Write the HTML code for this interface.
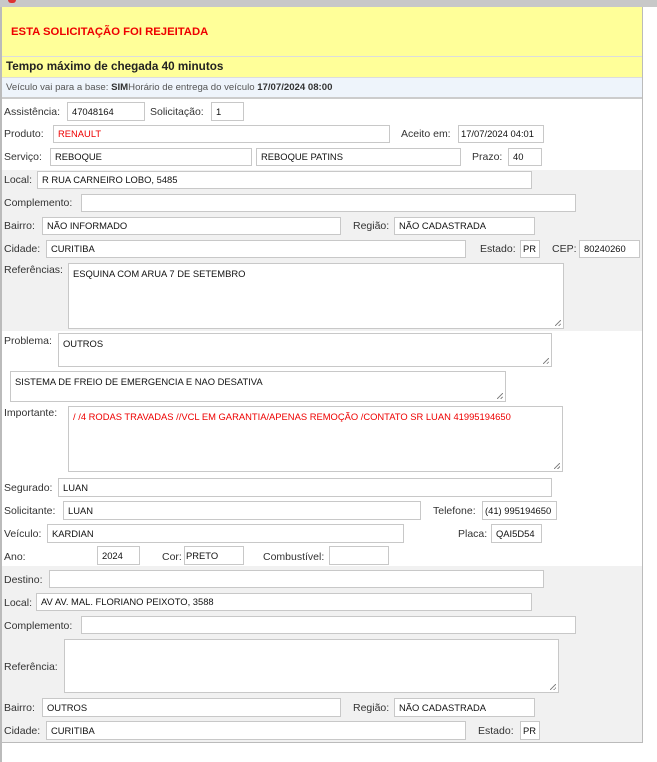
<!DOCTYPE html>
<html><head><meta charset="utf-8"><style>
*{margin:0;padding:0;box-sizing:border-box}
body{width:657px;height:762px;background:#fff;position:relative;overflow:hidden;font-family:"Liberation Sans",sans-serif;font-size:10.5px;color:#333}
.a{position:absolute}
.l{position:absolute;white-space:nowrap;color:#333}
.b{position:absolute;border:1px solid #c8c8c8;background:#fff;padding-left:4px;white-space:nowrap;overflow:hidden;font-size:9.4px;color:#111}
.t{padding-top:4px}
.rz{position:absolute;right:2px;bottom:2px;width:6px;height:6px;background:linear-gradient(135deg,transparent 45%,#888 45%,#888 55%,transparent 55%,transparent 75%,#888 75%,#888 85%,transparent 85%)}
</style></head><body>
<div class="a" style="left:0;top:0;width:657px;height:7px;background:#c8c8c8"></div>
<div class="a" style="left:8px;top:0;width:8px;height:3px;background:#d33;border-radius:0 0 4px 4px"></div>
<div class="a" style="left:1px;top:7px;width:642px;height:736px;border:1px solid #bbb;border-top:none"></div>
<div class="a" style="left:0;top:7px;width:2px;height:755px;background:#bbb"></div>
<div class="a" style="left:2px;top:7px;width:640px;height:49px;background:#ffff99"></div>
<div class="l" style="left:11px;top:26px;color:#e00;font-weight:bold;font-size:11.3px">ESTA SOLICITAÇÃO FOI REJEITADA</div>
<div class="a" style="left:2px;top:56px;width:640px;height:22px;background:#ffff99;border-top:1px solid #ddd;border-bottom:1px solid #ddd"></div>
<div class="l" style="left:6px;top:60px;font-weight:bold;font-size:11.7px;color:#222">Tempo máximo de chegada 40 minutos</div>
<div class="a" style="left:2px;top:78px;width:640px;height:21px;background:#eef4fb;border-bottom:2px solid #ccc"></div>
<div class="l" style="left:6px;top:82px;font-size:9.6px;color:#555">Veículo vai para a base: <b style="color:#333">SIM</b>Horário de entrega do veículo <b style="color:#333">17/07/2024 08:00</b></div>
<div class="a" style="left:2px;top:170px;width:640px;height:161px;background:#f1f1f1"></div>
<div class="a" style="left:2px;top:566px;width:640px;height:176px;background:#f1f1f1"></div>

<div class="l" style="left:4px;top:106px">Assistência:</div><div class="b" style="left:67px;top:102px;width:78px;height:19px;line-height:17px">47048164</div>
<div class="l" style="left:150px;top:106px">Solicitação:</div><div class="b" style="left:211px;top:102px;width:33px;height:19px;line-height:17px">1</div>
<div class="l" style="left:4px;top:128px">Produto:</div><div class="b" style="left:53px;top:125px;width:337px;height:18px;line-height:16px;color:#e00">RENAULT</div>
<div class="l" style="left:401px;top:128px">Aceito em:</div><div class="b" style="left:458px;top:125px;width:86px;height:18px;line-height:16px;padding-left:2px">17/07/2024 04:01</div>
<div class="l" style="left:4px;top:151px">Serviço:</div><div class="b" style="left:50px;top:148px;width:202px;height:18px;line-height:16px">REBOQUE</div>
<div class="b" style="left:256px;top:148px;width:205px;height:18px;line-height:16px">REBOQUE PATINS</div>
<div class="l" style="left:472px;top:151px">Prazo:</div><div class="b" style="left:508px;top:148px;width:34px;height:18px;line-height:16px">40</div>

<div class="l" style="left:4px;top:174px">Local:</div><div class="b" style="left:37px;top:171px;width:495px;height:18px;line-height:16px">R RUA CARNEIRO LOBO, 5485</div>
<div class="l" style="left:4px;top:197px">Complemento:</div><div class="b" style="left:81px;top:194px;width:495px;height:18px"></div>
<div class="l" style="left:4px;top:220px">Bairro:</div><div class="b" style="left:42px;top:217px;width:299px;height:18px;line-height:16px">NÃO INFORMADO</div>
<div class="l" style="left:353px;top:220px">Região:</div><div class="b" style="left:394px;top:217px;width:141px;height:18px;line-height:16px">NÃO CADASTRADA</div>
<div class="l" style="left:4px;top:243px">Cidade:</div><div class="b" style="left:46px;top:240px;width:420px;height:18px;line-height:16px">CURITIBA</div>
<div class="l" style="left:480px;top:243px">Estado:</div><div class="b" style="left:520px;top:240px;width:20px;height:18px;line-height:16px;padding-left:2px">PR</div>
<div class="l" style="left:552px;top:243px">CEP:</div><div class="b" style="left:579px;top:240px;width:61px;height:18px;line-height:16px">80240260</div>
<div class="l" style="left:4px;top:264px">Referências:</div><div class="b t" style="left:68px;top:263px;width:496px;height:66px">ESQUINA COM ARUA 7 DE SETEMBRO<div class="rz"></div></div>

<div class="l" style="left:4px;top:335px">Problema:</div><div class="b t" style="left:58px;top:333px;width:494px;height:34px">OUTROS<div class="rz"></div></div>
<div class="b t" style="left:10px;top:371px;width:496px;height:31px">SISTEMA DE FREIO DE EMERGENCIA E NAO DESATIVA<div class="rz"></div></div>
<div class="l" style="left:4px;top:407px">Importante:</div><div class="b t" style="left:68px;top:406px;width:495px;height:66px;color:#e00">/ /4 RODAS TRAVADAS //VCL EM GARANTIA/APENAS REMOÇÃO /CONTATO SR LUAN 41995194650<div class="rz"></div></div>
<div class="l" style="left:4px;top:482px">Segurado:</div><div class="b" style="left:58px;top:478px;width:494px;height:19px;line-height:17px">LUAN</div>
<div class="l" style="left:4px;top:505px">Solicitante:</div><div class="b" style="left:63px;top:501px;width:358px;height:19px;line-height:17px">LUAN</div>
<div class="l" style="left:433px;top:505px">Telefone:</div><div class="b" style="left:482px;top:501px;width:75px;height:19px;line-height:17px;padding-left:2px">(41) 995194650</div>
<div class="l" style="left:4px;top:528px">Veículo:</div><div class="b" style="left:47px;top:524px;width:357px;height:19px;line-height:17px">KARDIAN</div>
<div class="l" style="left:458px;top:528px">Placa:</div><div class="b" style="left:491px;top:524px;width:51px;height:19px;line-height:17px">QAI5D54</div>
<div class="l" style="left:4px;top:551px">Ano:</div><div class="b" style="left:97px;top:546px;width:43px;height:19px;line-height:17px">2024</div>
<div class="l" style="left:162px;top:551px">Cor:</div><div class="b" style="left:184px;top:546px;width:60px;height:19px;line-height:17px;padding-left:1px">PRETO</div>
<div class="l" style="left:263px;top:551px">Combustível:</div><div class="b" style="left:329px;top:546px;width:60px;height:19px"></div>

<div class="l" style="left:4px;top:574px">Destino:</div><div class="b" style="left:49px;top:570px;width:495px;height:18px"></div>
<div class="l" style="left:4px;top:597px">Local:</div><div class="b" style="left:36px;top:593px;width:496px;height:18px;line-height:16px">AV AV. MAL. FLORIANO PEIXOTO, 3588</div>
<div class="l" style="left:4px;top:620px">Complemento:</div><div class="b" style="left:81px;top:616px;width:495px;height:18px"></div>
<div class="l" style="left:4px;top:661px">Referência:</div><div class="b" style="left:64px;top:639px;width:495px;height:54px"><div class="rz"></div></div>
<div class="l" style="left:4px;top:702px">Bairro:</div><div class="b" style="left:42px;top:698px;width:299px;height:19px;line-height:17px">OUTROS</div>
<div class="l" style="left:353px;top:702px">Região:</div><div class="b" style="left:394px;top:698px;width:141px;height:19px;line-height:17px">NÃO CADASTRADA</div>
<div class="l" style="left:4px;top:725px">Cidade:</div><div class="b" style="left:46px;top:721px;width:420px;height:19px;line-height:17px">CURITIBA</div>
<div class="l" style="left:478px;top:725px">Estado:</div><div class="b" style="left:520px;top:721px;width:20px;height:19px;line-height:17px;padding-left:2px">PR</div>
</body></html>
